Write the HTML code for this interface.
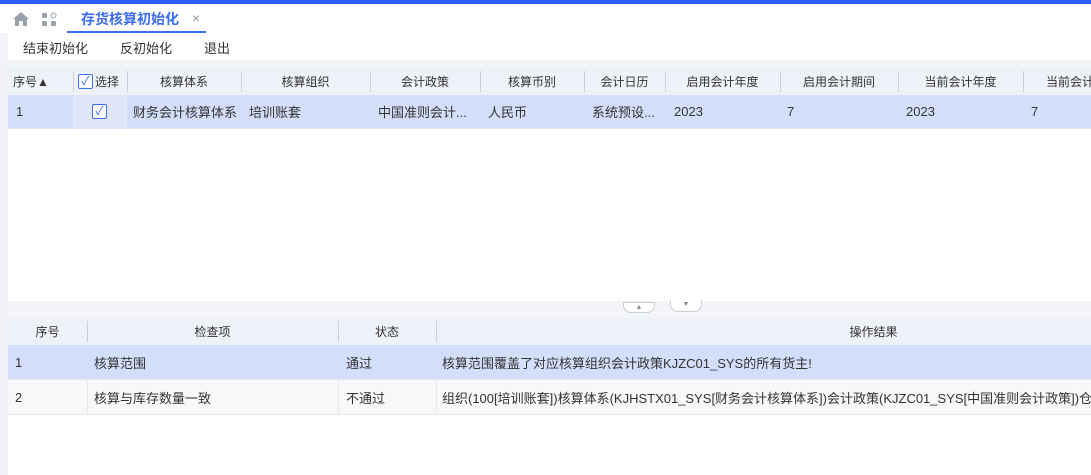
<!DOCTYPE html><html><head><meta charset="utf-8"><style>
*{margin:0;padding:0;box-sizing:border-box}
body{width:1091px;height:475px;overflow:hidden;background:#fff;font-family:"Liberation Sans","Noto Sans CJK SC",sans-serif;font-size:13px;color:#333;position:relative}
.a{position:absolute}
.hd{background:#eef1f8;color:#333;font-size:12px}
.c{position:absolute;top:0;height:100%;display:flex;align-items:center;white-space:nowrap;overflow:hidden}
.sep{position:absolute;width:1px;background:#ccd0d8}
.cb{display:inline-block;width:15px;height:15px;border:1px solid #3c6cf0;border-radius:2px;color:#3c6cf0;font-size:12px;line-height:13px;text-align:center;background:#fff}
</style></head><body>
<div class="a" style="left:0;top:0;width:1091px;height:4px;background:#2f5cf4"></div>
<div class="a" style="left:0;top:4px;width:1091px;height:29px;background:#fff"></div>
<svg class="a" style="left:12px;top:11px" width="18" height="16" viewBox="0 0 18 16"><path d="M9 1L1 8h2v7h4v-5h4v5h4V8h2z" fill="#9aa1ad"/></svg>
<svg class="a" style="left:41px;top:11px" width="17" height="17" viewBox="0 0 17 17"><rect x="1" y="2" width="5" height="5" rx="1" fill="#9aa1ad"/><circle cx="12.5" cy="4.5" r="2.5" fill="none" stroke="#9aa1ad"/><rect x="1" y="10" width="5" height="5" rx="1" fill="#9aa1ad"/><rect x="10" y="10" width="5" height="5" rx="1" fill="#9aa1ad"/></svg>
<div class="a" style="left:81px;top:9px;font-size:14px;font-weight:bold;color:#3c6cf0">存货核算初始化</div>
<div class="a" style="left:192px;top:10px;font-size:14px;color:#999">×</div>
<div class="a" style="left:67px;top:31px;width:139px;height:2px;background:#3c6cf0"></div>
<div class="a" style="left:0;top:33px;width:1091px;height:27px;background:#f3f4f7"></div>
<div class="a" style="left:8px;top:33px;width:1083px;height:27px;background:#fff"></div>
<div class="a" style="left:23px;top:38px;font-size:13px">结束初始化</div>
<div class="a" style="left:120px;top:38px;font-size:13px">反初始化</div>
<div class="a" style="left:204px;top:38px;font-size:13px">退出</div>
<div class="a" style="left:0;top:60px;width:8px;height:415px;background:#f0f2f5"></div>
<div class="a" style="left:8px;top:60px;width:1083px;height:8px;background:#f3f4f7"></div>
<div class="a hd" style="left:8px;top:68px;width:1083px;height:27px">
<div class="c" style="left:5px">序号<span style="font-size:12px">▲</span></div>
<div class="sep" style="left:65px;top:3px;height:21px"></div>
<div class="c" style="left:70px"><span class="cb" style="margin-right:2px">✓</span>选择</div>
<div class="sep" style="left:119px;top:3px;height:21px"></div>
<div class="c" style="left:119px;width:114px;justify-content:center">核算体系</div>
<div class="sep" style="left:233px;top:3px;height:21px"></div>
<div class="c" style="left:233px;width:129px;justify-content:center">核算组织</div>
<div class="sep" style="left:362px;top:3px;height:21px"></div>
<div class="c" style="left:362px;width:110px;justify-content:center">会计政策</div>
<div class="sep" style="left:472px;top:3px;height:21px"></div>
<div class="c" style="left:472px;width:104px;justify-content:center">核算币别</div>
<div class="sep" style="left:576px;top:3px;height:21px"></div>
<div class="c" style="left:576px;width:81px;justify-content:center">会计日历</div>
<div class="sep" style="left:657px;top:3px;height:21px"></div>
<div class="c" style="left:657px;width:115px;justify-content:center">启用会计年度</div>
<div class="sep" style="left:772px;top:3px;height:21px"></div>
<div class="c" style="left:772px;width:118px;justify-content:center">启用会计期间</div>
<div class="sep" style="left:890px;top:3px;height:21px"></div>
<div class="c" style="left:890px;width:125px;justify-content:center">当前会计年度</div>
<div class="sep" style="left:1015px;top:3px;height:21px"></div>
<div class="c" style="left:1038px">当前会计</div>
</div>
<div class="a" style="left:8px;top:95px;width:1083px;height:34px;background:#d3defb;border-bottom:1px solid #e2e5ea">
<div class="c" style="left:8px">1</div>
<div class="a" style="left:65px;top:0;width:54px;height:34px;background:#dfe6fa;border-left:1px solid #e8ebf0;border-right:1px solid #e8ebf0"></div>
<div class="c" style="left:84px"><span class="cb">✓</span></div>
<div class="c" style="left:125px">财务会计核算体系</div>
<div class="c" style="left:241px">培训账套</div>
<div class="c" style="left:370px">中国准则会计...</div>
<div class="c" style="left:480px">人民币</div>
<div class="c" style="left:584px">系统预设...</div>
<div class="c" style="left:666px">2023</div>
<div class="c" style="left:779px">7</div>
<div class="c" style="left:898px">2023</div>
<div class="c" style="left:1023px">7</div>
</div>
<div class="a" style="left:8px;top:301px;width:1083px;height:17px;background:#f3f4f7"></div>
<div class="a" style="left:623px;top:302px;width:32px;height:11px;border:1px solid #c8ccd4;border-radius:0 0 8px 8px;background:#fff;font-size:7px;color:#888;text-align:center;line-height:10px">▲</div>
<div class="a" style="left:670px;top:300px;width:32px;height:12px;border:1px solid #c8ccd4;border-top:none;border-radius:0 0 8px 8px;background:#fff;font-size:7px;color:#888;text-align:center;line-height:10px">▼</div>
<div class="a hd" style="left:8px;top:318px;width:1083px;height:27px">
<div class="c" style="left:0;width:79px;justify-content:center">序号</div>
<div class="sep" style="left:79px;top:3px;height:21px"></div>
<div class="c" style="left:79px;width:251px;justify-content:center">检查项</div>
<div class="sep" style="left:330px;top:3px;height:21px"></div>
<div class="c" style="left:330px;width:98px;justify-content:center">状态</div>
<div class="sep" style="left:428px;top:3px;height:21px"></div>
<div class="c" style="left:428px;width:875px;justify-content:center">操作结果</div>
</div>
<div class="a" style="left:8px;top:345px;width:1083px;height:35px;background:#d3defb;border-bottom:1px solid #e2e5ea">
<div class="c" style="left:7px">1</div>
<div class="c" style="left:86px">核算范围</div>
<div class="c" style="left:338px">通过</div>
<div class="c" style="left:434px">核算范围覆盖了对应核算组织会计政策KJZC01_SYS的所有货主!</div>
</div>
<div class="a" style="left:8px;top:380px;width:1083px;height:35px;background:#f7f8fa;border-bottom:1px solid #e2e5ea">
<div class="sep" style="left:79px;top:0;height:35px;background:#e6e8ec"></div>
<div class="sep" style="left:330px;top:0;height:35px;background:#e6e8ec"></div>
<div class="sep" style="left:428px;top:0;height:35px;background:#e6e8ec"></div>
<div class="c" style="left:7px">2</div>
<div class="c" style="left:86px">核算与库存数量一致</div>
<div class="c" style="left:338px">不通过</div>
<div class="c" style="left:434px">组织(100[培训账套])核算体系(KJHSTX01_SYS[财务会计核算体系])会计政策(KJZC01_SYS[中国准则会计政策])仓库</div>
</div>
</body></html>
